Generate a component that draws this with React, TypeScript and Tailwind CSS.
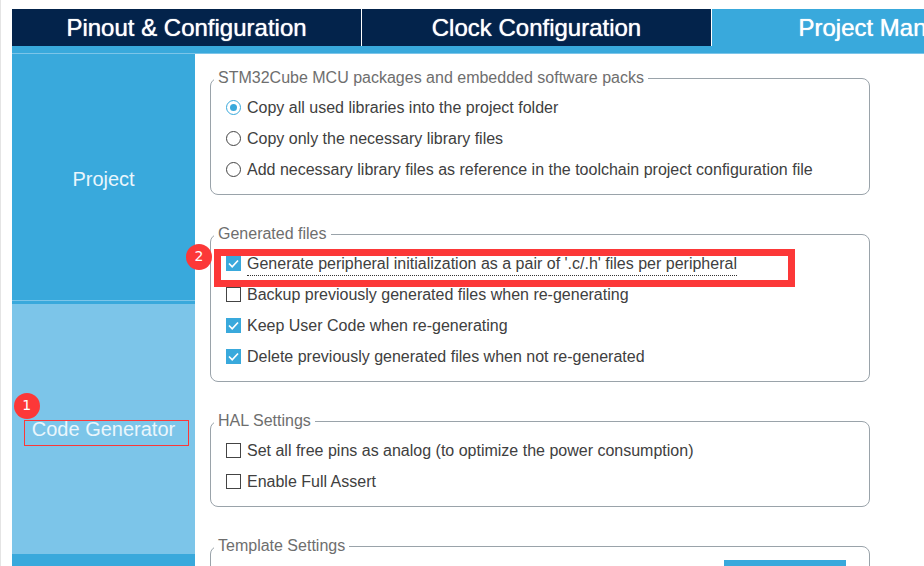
import type { ReactNode } from "react";

type OptionProps = {
  type: "checkbox" | "radio";
  label: string;
  name?: string;
  checked?: boolean;
  hinted?: boolean;
  children?: ReactNode;
};

function Option({ type, label, name, checked, hinted, children }: OptionProps) {
  return (
    <div className="relative flex h-[31px] items-center">
      <label className="flex items-center gap-1.5 whitespace-nowrap text-[#404040]">
        <span className="grid size-[15px] shrink-0 place-items-center">
          <input
            type={type}
            name={name}
            defaultChecked={checked}
            className={
              type === "radio"
                ? "peer col-start-1 row-start-1 size-[15px] appearance-none rounded-full border border-[#444] bg-white checked:border-[#39a9dc]"
                : "peer col-start-1 row-start-1 size-[15px] appearance-none border border-[#444] bg-white checked:border-[#39a9dc] checked:bg-[#39a9dc]"
            }
          />
          {type === "radio" ? (
            <span className="pointer-events-none col-start-1 row-start-1 hidden size-[7px] rounded-full bg-[#39a9dc] peer-checked:block" />
          ) : (
            <svg
              viewBox="0 0 15 15"
              className="pointer-events-none z-0 col-start-1 row-start-1 hidden size-[15px] peer-checked:block"
              fill="none"
              stroke="white"
              strokeWidth="1.7"
            >
              <path d="M3 7.5 L6.2 10.8 L12 4.5" />
            </svg>
          )}
        </span>
        <span
          className={
            hinted ? "border-b border-dotted border-[#333] pt-0.5 pb-px" : ""
          }
        >
          {label}
        </span>
      </label>
      {children}
    </div>
  );
}

function Group({ title, children }: { title: string; children: ReactNode }) {
  return (
    <fieldset className="w-full max-w-[660px] rounded-lg border border-[#9aa3aa] px-[15px] pt-1 pb-[9px]">
      <legend className="-ml-3 h-5 px-1 text-[#6e6e6e]">{title}</legend>
      {children}
    </fieldset>
  );
}

function Badge({ children, place }: { children: ReactNode; place: string }) {
  return (
    <span
      className={`absolute z-20 flex size-[26px] items-center justify-center rounded-full bg-[#fc3838] pb-0.5 font-['DejaVu_Sans',sans-serif] text-sm leading-5 text-white ${place}`}
    >
      {children}
    </span>
  );
}

function Tab({ label, active }: { label: string; active?: boolean }) {
  return (
    <button
      type="button"
      className={`h-[37px] w-[349px] shrink-0 text-2xl leading-7 text-white text-shadow-[0_0_1px_#fff] ${
        active ? "bg-[#39a9dc]" : "bg-[#03234b]"
      }`}
    >
      {label}
    </button>
  );
}

export default function App() {
  return (
    <div className="flex h-screen flex-col overflow-hidden border-l border-[#e4e4e4] bg-white pt-[9px] pl-[11px] font-['Liberation_Sans',Arial,sans-serif] text-base leading-5">
      <nav className="flex shrink-0 gap-px overflow-hidden">
        <Tab label="Pinout & Configuration" />
        <Tab label="Clock Configuration" />
        <Tab label="Project Manager" active />
      </nav>
      <div className="h-2 shrink-0 border-b border-[#7cc5e9] bg-[#39a9dc]" />

      <div className="flex min-h-0 flex-1">
        <aside className="flex w-[183px] shrink-0 flex-col overflow-hidden bg-[#39a9dc] text-xl text-[#eaf6fc]">
          <button
            type="button"
            className="flex h-[247px] shrink-0 items-center justify-center border-b border-[#7cc5e9] pt-1"
          >
            Project
          </button>
          <button
            type="button"
            className="mt-[3px] flex h-[250px] shrink-0 items-center justify-center bg-[#7cc5e9]"
          >
            <span className="relative whitespace-nowrap">
              Code Generator
              <span className="absolute top-[5px] -left-2 h-[26px] w-[165px] border border-[#fc3838]" />
              <Badge place="-left-[18px] -top-[22px]">1</Badge>
            </span>
          </button>
        </aside>

        <main className="flex min-w-0 flex-1 flex-col gap-[29px] px-[15px] pt-3.5">
          <Group title="STM32Cube MCU packages and embedded software packs">
            <Option
              type="radio"
              name="packages"
              checked
              label="Copy all used libraries into the project folder"
            />
            <Option
              type="radio"
              name="packages"
              label="Copy only the necessary library files"
            />
            <Option
              type="radio"
              name="packages"
              label="Add necessary library files as reference in the toolchain project configuration file"
            />
          </Group>

          <Group title="Generated files">
            <Option
              type="checkbox"
              checked
              hinted
              label="Generate peripheral initialization as a pair of '.c/.h' files per peripheral"
            >
              <span className="pointer-events-none absolute top-px -left-3 z-10 h-[38px] w-[581px] border-[7px] border-[#fc3838]" />
              <Badge place="-left-10 -top-1">2</Badge>
            </Option>
            <Option
              type="checkbox"
              label="Backup previously generated files when re-generating"
            />
            <Option
              type="checkbox"
              checked
              label="Keep User Code when re-generating"
            />
            <Option
              type="checkbox"
              checked
              label="Delete previously generated files when not re-generated"
            />
          </Group>

          <Group title="HAL Settings">
            <Option
              type="checkbox"
              label="Set all free pins as analog (to optimize the power consumption)"
            />
            <Option type="checkbox" label="Enable Full Assert" />
          </Group>

          <Group title="Template Settings">
            <div className="flex justify-end pr-2">
              <button
                type="button"
                aria-label="Settings"
                className="h-8 w-[122px] bg-[#39a9dc]"
              />
            </div>
          </Group>
        </main>
      </div>
    </div>
  );
}
